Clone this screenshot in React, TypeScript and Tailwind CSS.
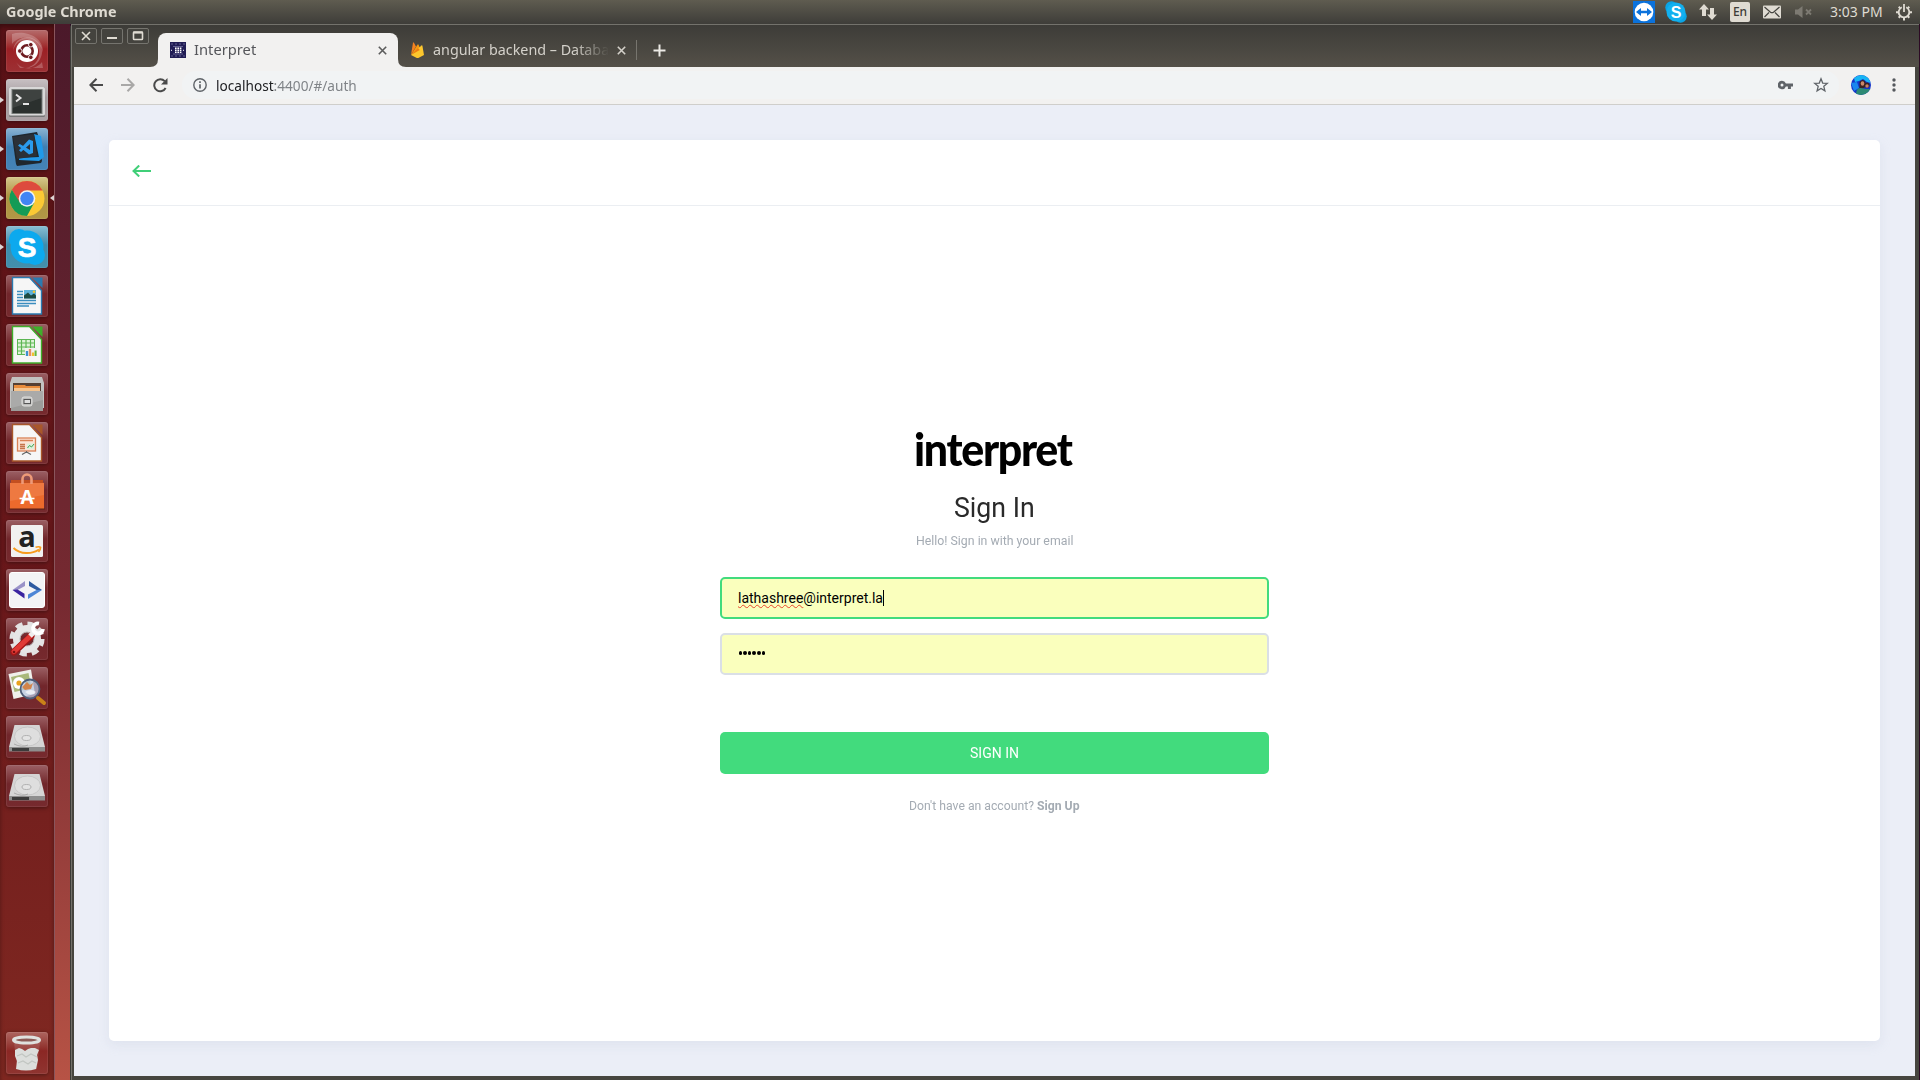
import { useLayoutEffect, useRef, type ReactNode } from 'react';
import clsx from 'clsx';

/** Text set on one line and condensed or widened to an exact measure. */
function FitText({ width, className, children }: { width: number; className?: string; children: ReactNode }) {
  const ref = useRef<HTMLSpanElement>(null);
  useLayoutEffect(() => {
    const el = ref.current;
    if (el) el.style.transform = `scaleX(${width / el.offsetWidth})`;
  }, [width]);
  return (
    <span className={clsx('block shrink-0 whitespace-nowrap', className)} style={{ width }}>
      <span ref={ref} className="inline-block origin-left">
        {children}
      </span>
    </span>
  );
}

/* ---------- Top panel ---------- */

function TopPanel() {
  return (
    <header className="flex h-6 shrink-0 items-center justify-between bg-linear-to-b from-[#5f5c50] to-[#3e3d39] font-['Noto_Sans',sans-serif] text-[#dfdbd2]">
      <FitText width={110} className="pl-[6px] text-[14px] leading-6 font-bold">
        Google Chrome
      </FitText>
      <div className="flex h-6 items-center pr-2">
        <svg width="22" height="22" viewBox="0 0 22 22">
          <rect width="22" height="22" fill="#0b72dc" />
          <circle cx="11" cy="11" r="9.3" fill="#fff" />
          <path d="M3 11l5-4v2.700h6V7l5 4-5 4v-2.700H8V15z" fill="#0b72dc" />
        </svg>
        <svg className="ml-[10px]" width="22" height="22" viewBox="0 0 22 22">
          <circle cx="6.5" cy="6.5" r="6.2" fill="#0aa5e6" />
          <circle cx="15.5" cy="15.5" r="6.2" fill="#0aa5e6" />
          <circle cx="11" cy="11" r="9.5" fill="#12b0ef" />
          <text x="11" y="16.6" textAnchor="middle" fontFamily="Liberation Sans" fontWeight="700" fontSize="16" fill="#fff">
            S
          </text>
        </svg>
        <svg className="ml-3" width="18" height="18" viewBox="0 0 18 18" fill="#dfdbd2">
          <path d="M5 1l5 5.500H7V13H3V6.500H0z" />
          <path d="M13 17l-5-5.500h3V5h4v6.500h3z" />
        </svg>
        <div className="ml-[13px] flex h-5 w-5 items-center justify-center rounded-[2px] bg-[#dfdbd2] text-[12px] leading-5 font-medium text-[#3c3b37]">
          En
        </div>
        <svg className="ml-[13px]" width="18" height="14" viewBox="0 0 18 14">
          <rect width="18" height="13" y=".5" rx="1" fill="#dfdbd2" />
          <path d="M1.500 2l6 5.200q1.500 1 3 0l6-5.200M1.500 12l4.500-4.500M16.500 12L12 7.500" fill="none" stroke="#45443f" strokeWidth="1.200" />
        </svg>
        <svg className="ml-[14px]" width="18" height="14" viewBox="0 0 18 14">
          <path d="M0 4.500h3L7.500 1v12L3 9.500H0z" fill="#7d7a72" />
          <path d="M11 4.500l5 5m0-5l-5 5" stroke="#7d7a72" strokeWidth="1.800" />
        </svg>
        <FitText width={53} className="ml-[17px] text-[14px] leading-6">
          3:03 PM
        </FitText>
        <svg className="ml-[13px]" width="16" height="18" viewBox="0 0 16 18" fill="none" stroke="#dfdbd2">
          <path d="M5.800 4.300a5.300 5.300 0 1 0 4.400 0" strokeWidth="1.800" />
          <path d="M8 1v8" strokeWidth="1.800" />
          <path d="M2.700 3.700l1.400 1.400M13.300 3.700l-1.400 1.400M0 9.200h2.500M13.500 9.200H16M2.700 14.700l1.400-1.400M13.300 14.700l-1.400-1.400M8 14.500V17.500" strokeWidth="2" />
        </svg>
      </div>
    </header>
  );
}

/* ---------- Launcher ---------- */

const UbuntuIcon = () => (
  <svg width="42" height="42" viewBox="0 0 42 42">
    <path d="M7 22C7 5 28 2 35 16c4 10-4 22-15 22 16-3 18-24 3-28C15 8 8 14 7 22z" fill="#fff" opacity=".25" />
    <path d="M6 4c12-4 32 2 31 19C34 8 16 2 6 14zM10 32c6 9 20 8 26 0l1 6H14z" fill="#fff" opacity=".22" />
    <circle cx="21" cy="21" r="11" fill="#fff" />
    <circle cx="21" cy="21" r="5.700" fill="none" stroke="#6d1b20" strokeWidth="2.600" />
    <g fill="#6d1b20" stroke="#fff" strokeWidth=".9">
      <circle cx="13.800" cy="21" r="2.300" />
      <circle cx="24.800" cy="14.700" r="2.300" />
      <circle cx="24.800" cy="27.300" r="2.300" />
    </g>
  </svg>
);

const TerminalIcon = () => (
  <svg width="42" height="42" viewBox="0 0 42 42">
    <rect x="3" y="8" width="36" height="30" rx="1.500" fill="#777" />
    <rect x="3" y="8" width="36" height="28.500" rx="1.500" fill="#d8d8d8" />
    <rect x="5.500" y="10" width="31" height="25" fill="#777b78" />
    <rect x="6.500" y="11" width="29" height="23" fill="#2b302e" />
    <path d="M6.500 11h29v8l-29 10z" fill="#fff" opacity=".09" />
    <path d="M10 15.500l4.500 3.500-4.500 3.500M17 25h6" fill="none" stroke="#e4e4e4" strokeWidth="2" />
  </svg>
);

const CodeIcon = () => (
  <svg width="42" height="42" viewBox="0 0 42 42">
    <path d="M12 30l25-3-3 6-22 2z" fill="#1177c7" />
    <path d="M6 8l25-4 1 3 4 26-1 2-24 3-1-2z" fill="#1f272e" />
    <path d="M28 6l7 2 3 21-5 4-20-1v-2l20-1z" fill="#2099ea" />
    <path d="M7 9l21-3 3 22-20 3z" fill="#2b3037" />
    <path d="M23 11.500l4 1.500v12l-4 1.500-11-9 1.800-1.600L24 22v-6l-9 8-2-1.800z" fill="#2b9bed" />
  </svg>
);

const ChromeIcon = () => (
  <svg width="42" height="42" viewBox="0 0 42 42">
    <circle cx="21" cy="21.500" r="17.500" fill="#fbc934" />
    <path d="M5.840 12.750A17.500 17.500 0 0 1 36.160 12.750L36.500 13.500H21L13.500 26z" fill="#dd4b3e" />
    <path d="M5.840 12.750A17.500 17.500 0 0 0 21 39l7.200-13.200L13.900 25.600z" fill="#149b56" />
    <circle cx="21" cy="21.500" r="8.300" fill="#f3f3f3" />
    <circle cx="21" cy="21.500" r="6.700" fill="#4285f4" />
  </svg>
);

const SkypeIcon = () => (
  <svg width="42" height="42" viewBox="0 0 42 42">
    <circle cx="13" cy="13" r="10" fill="#0ca9ee" />
    <circle cx="29" cy="29" r="10" fill="#0ca9ee" />
    <circle cx="21" cy="21" r="16.500" fill="#0ca9ee" />
    <text x="21" y="30.500" textAnchor="middle" fontFamily="Liberation Sans" fontWeight="700" fontSize="28" fill="#fff" stroke="#fff" strokeWidth=".7">
      S
    </text>
  </svg>
);

function Sheet({ color, children }: { color: string; children: ReactNode }) {
  return (
    <svg width="42" height="42" viewBox="0 0 42 42">
      <path d="M6.500 2.500h17l12 13V39h-29z" fill="#f6f6f6" stroke={color} strokeWidth="1.400" />
      <path d="M26 2.500h10.500V13z" fill={color} />
      {children}
    </svg>
  );
}

const WriterIcon = () => (
  <Sheet color="#2a7ab0">
    <path d="M11 16.500h6M11 19.500h6M11 22.500h6M11 25.500h19M11 28.500h19M11 31h12" stroke="#3b8dbf" strokeWidth="1.700" />
    <rect x="18" y="15" width="12" height="8.500" fill="#5db1da" />
    <path d="M18 23.500v-3l4-3 3 3 3-2 2 2v3z" fill="#1c4a42" />
    <circle cx="28" cy="16.800" r="1.300" fill="#f4c430" />
  </Sheet>
);

const CalcIcon = () => (
  <Sheet color="#3fae2a">
    <rect x="11.500" y="15.500" width="17" height="15" fill="#dff3d8" stroke="#5db653" />
    <path d="M11 19h18M11 23h18M11 27h18M15.500 15v16M20 15v16M24.500 15v16" stroke="#5db653" strokeWidth="1.200" />
    <rect x="19" y="24" width="12" height="8" fill="#f1f1f1" />
    <path d="M21 32v-5" stroke="#3d8fd0" strokeWidth="2.300" />
    <path d="M24 32v-7" stroke="#e78e62" strokeWidth="2.300" />
    <path d="M27 32v-3.500" stroke="#f1c12e" strokeWidth="2.300" />
    <path d="M29.600 32v-5.500" stroke="#65b83c" strokeWidth="2" />
  </Sheet>
);

const FilesIcon = () => (
  <svg width="42" height="42" viewBox="0 0 42 42">
    <path d="M6 4h30l2 6v25H4V10z" fill="#c3c3c1" />
    <path d="M7 10h28v9H7z" fill="#554034" />
    <path d="M8 12h11l1 1h14v5H8z" fill="#e88c3c" />
    <path d="M8 15h26v3H8z" fill="#f5c48f" />
    <path d="M5 18h32v20H5z" fill="#9c9c9a" />
    <path d="M5 18h32v9L5 35z" fill="#fff" opacity=".15" />
    <rect x="16" y="24" width="10" height="9" rx="2" fill="#bdbdbb" stroke="#e0e0de" />
    <rect x="18" y="26.500" width="6.500" height="4" fill="#ddd" stroke="#555" strokeWidth="1" />
  </svg>
);

const ImpressIcon = () => (
  <Sheet color="#a8572a">
    <rect x="11.500" y="16" width="18" height="13" fill="#fbe3d5" stroke="#d98256" strokeWidth="1.300" />
    <path d="M14 18.500h13" stroke="#d98256" strokeWidth="1.500" />
    <path d="M14 22.500h5M14 24.500h5M14 26.500h5" stroke="#c4734a" strokeWidth="1.400" />
    <rect x="21" y="21.500" width="7" height="5.500" fill="#dcefdc" />
    <path d="M21.500 26l2-2.500 2 1.500 2.500-3" stroke="#40a050" fill="none" />
    <path d="M20.500 29v2M16 32.500l4.500-2.500 4.500 2.500" stroke="#666" fill="none" strokeWidth="1.200" />
  </Sheet>
);

const SoftwareIcon = () => (
  <svg className="overflow-visible" width="42" height="42" viewBox="0 0 42 42">
    <path d="M4 12l3-1h28l3 1v26H4z" fill="#ec6a2c" />
    <path d="M5 9h32v3H5z" fill="#c34f20" />
    <path d="M4 12h34v12L4 30z" fill="#fff" opacity=".1" />
    <path d="M16.500 13V8a4.500 4.500 0 0 1 9 0v5" fill="none" stroke="#ee9a78" strokeWidth="2.600" />
    <path d="M3 38h36" stroke="#5b2313" />
    <text x="21" y="32.500" textAnchor="middle" fontFamily="Noto Sans" fontWeight="700" fontSize="19" fill="#fff">
      A
    </text>
    <path d="M13.500 27.500h15" stroke="#fff" strokeWidth="1.600" />
  </svg>
);

const AmazonIcon = () => (
  <svg className="overflow-visible" width="42" height="42" viewBox="0 0 42 42">
    <rect x="5" y="5" width="32" height="32" rx="1.500" fill="#f1f1f1" />
    <text x="21" y="26.500" textAnchor="middle" fontFamily="Open Sans" fontWeight="700" fontSize="29" fill="#222">
      a
    </text>
    <path d="M7.500 28c7 6.500 18 6.500 25.500 1.500" fill="none" stroke="#f79a1c" strokeWidth="2" />
    <path d="M29.500 27.200q4-1 5 .2 0 2.500-2 4.600" fill="none" stroke="#f79a1c" strokeWidth="1.700" />
  </svg>
);

const BracketsIcon = () => (
  <svg width="42" height="42" viewBox="0 0 42 42">
    <rect x="3.500" y="3.500" width="35" height="35" rx="2.500" fill="#f3f3f5" stroke="#fff" />
    <path d="M19 12v5l-7.500 4L6.500 21z" fill="#9a92c8" />
    <path d="M6.500 21l5-.5 7 4.200v4.800z" fill="#3a23a0" />
    <path d="M23 12v5l7.500 4 5.500 0z" fill="#2e5aa0" />
    <path d="M36 21h-5.500L22 25.500v4.500z" fill="#4e86d6" />
  </svg>
);

const SettingsIcon = () => (
  <svg width="42" height="42" viewBox="0 0 42 42">
    <circle cx="21" cy="21" r="15.300" fill="none" stroke="#e2e2e2" strokeWidth="4.500" strokeDasharray="7 5.016" />
    <circle cx="21" cy="21" r="10.500" fill="none" stroke="#e6e6e6" strokeWidth="7" />
    <circle cx="21" cy="21" r="7" fill="none" stroke="#b9b9b9" strokeWidth="1" />
    <path d="M8 34L25 18" stroke="#a31515" strokeWidth="7" strokeLinecap="round" />
    <path d="M8 33.500L25 17.500" stroke="#e03a35" strokeWidth="5" strokeLinecap="round" />
    <path d="M24 18l6-6" stroke="#eee" strokeWidth="5" />
    <path d="M33 5.500a5 5 0 1 0 4 5.500" fill="none" stroke="#fff" strokeWidth="3.800" />
    <circle cx="8" cy="34" r="1.300" fill="#7a1010" />
  </svg>
);

const ViewerIcon = () => (
  <svg width="42" height="42" viewBox="0 0 42 42">
    <path d="M2.500 7L25 2.500 29 27 7.500 32z" fill="#f0f0ec" />
    <path d="M5 10L22.500 6l3 15L8.500 25z" fill="#a9b87a" />
    <circle cx="13" cy="16" r="6" fill="#fff" />
    <circle cx="13" cy="16" r="2.600" fill="#e9a21d" />
    <circle cx="24" cy="22" r="9.500" fill="#b8c8e0" fillOpacity=".75" stroke="#4d5d78" strokeWidth="1.800" />
    <path d="M16 20l5-5 3 3 3-2-2 6-6 1z" fill="#d9742b" opacity=".8" />
    <path d="M19 25q6-4 11 0-5 5-11 0" fill="#fff" opacity=".65" />
    <path d="M32 31l6 5" stroke="#c98218" strokeWidth="4" strokeLinecap="round" />
  </svg>
);

const DriveIcon = () => (
  <svg width="42" height="42" viewBox="0 0 42 42">
    <path d="M8.500 9h25L39 31H3z" fill="#d5d5d5" />
    <path d="M3 31h36v4.500H3z" fill="#8e8e8e" />
    <path d="M6 32h17v3H6z" fill="#3c3c3c" />
    <ellipse cx="21.500" cy="20.500" rx="13" ry="9.500" fill="#dedede" stroke="#c4c4c4" strokeWidth=".9" />
    <ellipse cx="20.500" cy="22" rx="4.500" ry="2.500" fill="#e4e4e4" stroke="#aaa" strokeWidth=".9" />
    <path d="M8 28q8 4 14 1" stroke="#aaa" fill="none" />
  </svg>
);

const TrashIcon = () => (
  <svg width="42" height="42" viewBox="0 0 42 42">
    <path d="M8 10h26l-3 27q-10 2-20 0z" fill="#e8d8d6" opacity=".15" />
    <path d="M9 18l4-2 3 1 3 2 3-2 3-1 4 0 4 2-2 5 1 5-2 9q-10 3-20 0l1-8-2-5z" fill="#dcdedc" />
    <path d="M11 24l5-2 4 3 5-3 6 3M12 31l5-2 5 3 4-3 4 2" stroke="#c2c6c2" fill="none" strokeWidth="1.200" />
    <ellipse cx="20.500" cy="8" rx="13" ry="3" fill="#8c5a56" stroke="#dfe1df" strokeWidth="3" />
  </svg>
);

type Launcher = { name: string; icon: () => ReactNode; tile: string; running?: boolean; focused?: boolean };

const plain = 'from-[#9b6065] via-[#71262b] to-[#762a2e]';

const launchers: Launcher[] = [
  { name: 'Dash', icon: UbuntuIcon, tile: 'from-[#b56b6c] via-[#9c1f24] to-[#9d3034]' },
  { name: 'Terminal', icon: TerminalIcon, tile: 'from-[#c7c0c3] via-[#a39a9d] to-[#aaa1a4]', running: true },
  { name: 'Code', icon: CodeIcon, tile: 'from-[#8bb4d3] via-[#3f7fb3] to-[#4583b6]', running: true },
  { name: 'Chrome', icon: ChromeIcon, tile: 'from-[#d6c88c] via-[#ad9440] to-[#b19746]', running: true, focused: true },
  { name: 'Skype', icon: SkypeIcon, tile: 'from-[#8abfd2] via-[#3d8dad] to-[#438fab]', running: true },
  { name: 'Writer', icon: WriterIcon, tile: plain },
  { name: 'Calc', icon: CalcIcon, tile: plain },
  { name: 'Files', icon: FilesIcon, tile: plain },
  { name: 'Impress', icon: ImpressIcon, tile: plain },
  { name: 'Software', icon: SoftwareIcon, tile: plain },
  { name: 'Amazon', icon: AmazonIcon, tile: plain },
  { name: 'Brackets', icon: BracketsIcon, tile: plain },
  { name: 'Settings', icon: SettingsIcon, tile: plain },
  { name: 'Image Viewer', icon: ViewerIcon, tile: plain },
  { name: 'Drive 1', icon: DriveIcon, tile: plain },
  { name: 'Drive 2', icon: DriveIcon, tile: plain },
];

function Tile({ item }: { item: Launcher }) {
  const Icon = item.icon;
  return (
    <div className="relative flex h-[42px] w-[54px] shrink-0 pl-[6px]">
      {item.running && (
        <span className="absolute top-[18px] left-0 border-y-[3px] border-l-4 border-y-transparent border-l-[#ddd5d5]" />
      )}
      <div
        aria-label={item.name}
        className={clsx(
          'h-[42px] w-[42px] rounded-[3px] bg-linear-to-b via-45% shadow-[0_1px_4px_rgba(0,0,0,0.4),inset_0_0_0_1px_rgba(255,255,255,0.08)]',
          item.tile,
        )}
      >
        <Icon />
      </div>
      {item.focused && (
        <span className="absolute top-[18px] right-0 border-y-[3px] border-r-4 border-y-transparent border-r-[#ddd5d5]" />
      )}
    </div>
  );
}

function LauncherBar() {
  return (
    <aside className="flex h-full w-[54px] shrink-0 flex-col justify-between bg-linear-to-b from-[#5b1217] via-[#6a181b] to-[#802821] pt-[6px] pb-[6px] shadow-[inset_0_3px_4px_rgba(0,0,0,0.35)]">
      <div className="flex flex-col gap-[7px]">
        {launchers.map((item) => (
          <Tile key={item.name} item={item} />
        ))}
      </div>
      <Tile item={{ name: 'Trash', icon: TrashIcon, tile: 'from-[#ad6560] via-[#8b2724] to-[#8f3430]' }} />
    </aside>
  );
}

/* ---------- Browser chrome ---------- */

function WindowButton({ children }: { children: ReactNode }) {
  return (
    <div className="flex h-4 w-[22px] items-center justify-center rounded-[2px] border border-[#75746e] bg-[#44433e]">
      <svg width="12" height="12" viewBox="0 0 12 12" fill="none" stroke="#dfdbd2" strokeWidth="1.600">
        {children}
      </svg>
    </div>
  );
}

const Cross = ({ className }: { className?: string }) => (
  <svg className={className} width="9" height="9" viewBox="0 0 9 9" fill="none" stroke="currentColor" strokeWidth="1.600">
    <path d="M.8.8l7.400 7.400M8.200.8L.8 8.200" />
  </svg>
);

function TabStrip() {
  return (
    <div className="flex h-[43px] shrink-0 border-t border-[#73726c] bg-linear-to-b from-[#3d3c38] to-[#545048] pl-[3px] font-['Noto_Sans',sans-serif] text-[14px]">
      <div className="flex w-[75px] shrink-0 gap-1 pt-[3px]">
        <WindowButton>
          <path d="M2 2l8 8M10 2l-8 8" />
        </WindowButton>
        <WindowButton>
          <path d="M1 8h10" strokeWidth="2" />
        </WindowButton>
        <WindowButton>
          <rect x="1.500" y="2" width="9" height="7.500" rx=".8" />
          <path d="M1 2.600h10" strokeWidth="2" />
        </WindowButton>
      </div>
      <svg className="mt-[34px] shrink-0" width="8" height="8" viewBox="0 0 8 8" fill="#f2f1f0">
        <path d="M8 0v8H0q8 0 8-8z" />
      </svg>
      <div className="mt-2 flex h-[34px] w-[240px] shrink-0 items-center rounded-t-[8px] bg-[#f2f1f0] pl-3 text-[#55565a]">
        <svg width="16" height="16" viewBox="0 0 16 16">
          <rect width="16" height="16" fill="#211d55" />
          <g stroke="#a9a6d0" strokeWidth="1">
            <path d="M1.500 2h13M1.500 14h13" strokeDasharray="1 3" />
            <path d="M3.500 4.500h10M3.500 12h10" strokeDasharray="1 1" />
          </g>
          <g stroke="#fff" strokeWidth="1.600">
            <path d="M5 6.300h6.500M5 8.300h6.500M5 10.300h6.500" strokeDasharray="1.600 .8" />
            <path d="M1 8.300h2M13 8.300h2" strokeWidth="1" strokeDasharray="1 1" />
          </g>
        </svg>
        <FitText width={62} className="ml-2 leading-5">
          Interpret
        </FitText>
        <Cross className="ml-[121.500px] text-[#5c5c5c]" />
      </div>
      <svg className="mt-[34px] shrink-0" width="8" height="8" viewBox="0 0 8 8" fill="#f2f1f0">
        <path d="M0 0v8h8Q0 8 0 0z" />
      </svg>
      <div className="mt-2 flex h-[34px] items-center text-[#d4d1ca]">
        <svg className="ml-[5px]" width="13" height="16" viewBox="0 0 13 16">
          <path d="M0 13L2 .8q.4-.8.9-.1L5 4.500z" fill="#f58220" />
          <path d="M0 13L6.600 2.500q.4-.6.8 0L9 6z" fill="#f79a12" />
          <path d="M0 13L10.500 3.500q.7-.4.9.3L13 13l-5.700 3q-.8.300-1.500 0z" fill="#fdc72d" />
          <path d="M0 13L7 6l1.800 2z" fill="#ee7d12" />
        </svg>
        <div className="ml-[9px] w-[176px] mask-r-from-80% mask-r-to-100%">
          <FitText width={176} className="leading-5">
            angular backend – Databa
          </FitText>
        </div>
        <Cross className="ml-[7.500px]" />
        <span className="ml-[10.500px] h-5 w-px bg-[#77756e]" />
        <svg className="ml-4" width="13" height="13" viewBox="0 0 13 13" stroke="#eceae5" strokeWidth="2">
          <path d="M6.500.5v12M.5 6.500h12" />
        </svg>
      </div>
    </div>
  );
}

function Toolbar() {
  return (
    <div className="flex h-[38px] shrink-0 items-center border-b border-[#cfcecb] bg-[#f2f1f0] pb-px pl-[15px] text-[#4a4a4a]">
      <svg width="14" height="14" viewBox="0 0 14 14" fill="none" stroke="currentColor" strokeWidth="2">
        <path d="M14 7H1.500M7.500.8L1.400 7l6.100 6.200" />
      </svg>
      <svg className="ml-[18px] text-[#a9a8a7]" width="14" height="14" viewBox="0 0 14 14" fill="none" stroke="currentColor" strokeWidth="2">
        <path d="M0 7h12.500M6.500.8L12.600 7l-6.100 6.200" />
      </svg>
      <svg className="ml-[18px]" width="15" height="15" viewBox="0 0 15 15">
        <path d="M12.600 10A6 6 0 1 1 11.700 3.200" fill="none" stroke="currentColor" strokeWidth="2" />
        <path d="M14.500 0v6.500H8z" fill="currentColor" />
      </svg>
      <div className="ml-[14px] flex h-7 flex-1 items-center rounded-full bg-[#f1f3f4] pl-[11px] font-['Noto_Sans',sans-serif] text-[14.500px]">
        <svg width="14" height="14" viewBox="0 0 14 14" fill="none" stroke="#5f6368" strokeWidth="1.400">
          <circle cx="7" cy="7" r="6.200" />
          <path d="M7 6.200v4.300M7 3.300v1.600" strokeWidth="1.700" />
        </svg>
        <FitText width={141} className="ml-[9px] leading-6 text-[#808488]">
          <span className="text-[#202124]">localhost</span>:4400/#/auth
        </FitText>
        <div className="ml-auto flex items-center gap-[20px] pr-[10px]">
          <svg width="15" height="10" viewBox="0 0 15 10" fill="#5f6368">
            <path d="M4 .8a4.200 4.200 0 1 0 3.900 5.700h2V9h3V6.500H15v-3H7.900A4.200 4.200 0 0 0 4 .8zm0 2.700a1.500 1.500 0 1 1 0 3 1.500 1.500 0 0 1 0-3z" />
          </svg>
          <svg width="16" height="16" viewBox="0 0 16 16" fill="none" stroke="#5f6368" strokeWidth="1.300">
            <path d="M8 1.800l1.700 4.300 4.600.3-3.500 2.900 1.100 4.500L8 11.400l-3.900 2.400 1.100-4.500-3.500-2.900 4.600-.3z" />
          </svg>
        </div>
      </div>
      <svg className="ml-[12px]" width="20" height="20" viewBox="0 0 20 20">
        <clipPath id="avatar">
          <circle cx="10" cy="10" r="10" />
        </clipPath>
        <g clipPath="url(#avatar)">
          <rect width="20" height="20" fill="#1433c9" />
          <path d="M3 3q6-5 14-2l3 7-4-1-4-3-4 2-4 1z" fill="#18b4f4" />
          <path d="M0 8l6-1 2 6-5 3z" fill="#1a86ee" />
          <path d="M8.500 7q3.500-4 6 0v5l-6 3z" fill="#3a2022" />
          <ellipse cx="11.500" cy="8.500" rx="1.800" ry="2.300" fill="#c9886a" />
          <circle cx="16" cy="10" r="2.600" fill="#3a2022" />
          <circle cx="16" cy="11" r="1.700" fill="#c98468" />
          <path d="M5 20q0-8 5-7l5 1 5 0v6z" fill="#2c8a74" />
        </g>
      </svg>
      <svg className="mr-[19.500px] ml-[20.500px]" width="4" height="14" viewBox="0 0 4 14" fill="#55585c">
        <circle cx="2" cy="2" r="1.700" />
        <circle cx="2" cy="7" r="1.700" />
        <circle cx="2" cy="12" r="1.700" />
      </svg>
    </div>
  );
}

/* ---------- Page ---------- */

function SignInPage() {
  return (
    <main className="flex-1 bg-[#ebeef7] px-[35px] pt-[35px] pb-[35px] font-['Roboto',sans-serif]">
      <section className="flex h-full flex-col rounded-[5px] bg-white shadow-[0_4px_12px_rgba(174,185,205,0.2)]">
        <div className="flex h-[66px] shrink-0 items-center border-b border-[#ebeef2] pl-[23px]">
          <svg className="mt-[-4px]" width="19" height="12" viewBox="0 0 19 12" fill="none" stroke="#40cf78" strokeWidth="2">
            <path d="M19 6H1.500M7.200.5L1.500 6l5.700 5.500" />
          </svg>
        </div>
        <div className="flex flex-col items-center pt-[213px]">
          <FitText
            width={158}
            className="mr-[3px] h-[73px] font-['Lato',sans-serif] text-[45px] leading-[60px] font-black tracking-[-0.03em] text-black"
          >
            interpret
          </FitText>
          <FitText width={81} className="h-[41px] text-[28px] leading-8 text-[#2a2a2a]">
            Sign In
          </FitText>
          <FitText width={157} className="h-[44px] text-[12px] leading-4 text-[#a4abb3]">
            Hello! Sign in with your email
          </FitText>
          <div className="flex h-[42px] w-[549px] items-center rounded-[5px] border-2 border-[#42db7d] bg-[#faffbd] pl-4 text-[14px] text-black">
            <span className="underline decoration-[#e8452c] decoration-wavy decoration-[0.700px] underline-offset-1">lathashree</span>
            <span>@interpret.la</span>
            <span className="h-4 w-px bg-black" />
          </div>
          <div className="mt-[14px] flex h-[42px] w-[549px] items-center gap-[1.170px] rounded-[5px] border-2 border-[#dadfe6] bg-[#faffbd] pb-[2px] pl-[16.500px]">
            {[0, 1, 2, 3, 4, 5].map((dot) => (
              <span key={dot} className="h-[3.500px] w-[3.500px] rounded-full bg-black" />
            ))}
          </div>
          <button className="mt-[57px] flex h-[42px] w-[549px] items-center justify-center rounded-[5px] bg-[#42db7d] text-white">
            <FitText width={49} className="text-[15.500px] leading-5">
              SIGN IN
            </FitText>
          </button>
          <FitText width={171} className="mt-6 text-[12px] leading-4 text-[#a4abb3]">
            Don't have an account? <span className="font-bold">Sign Up</span>
          </FitText>
        </div>
      </section>
    </main>
  );
}

export default function App() {
  return (
    <div className="flex h-[1080px] w-[1920px] flex-col overflow-hidden bg-[#2c0a24]">
      <TopPanel />
      <div className="flex min-h-0 flex-1">
        <LauncherBar />
        <div className="w-4 shrink-0 border-l border-[#8a555c] bg-linear-to-b from-[#4b192a] via-[#772a31] via-55% to-[#b75345]" />
        <div className="flex w-[1849px] flex-col rounded-t-[4px] border-l border-[#3c3b37] bg-[#46453f]">
          <div className="flex min-h-0 flex-1 flex-col border-l border-[#73726c] pb-1">
            <TabStrip />
            <div className="mr-1 ml-[2px] flex min-h-0 flex-1 flex-col">
              <Toolbar />
              <SignInPage />
            </div>
          </div>
        </div>
      </div>
    </div>
  );
}
